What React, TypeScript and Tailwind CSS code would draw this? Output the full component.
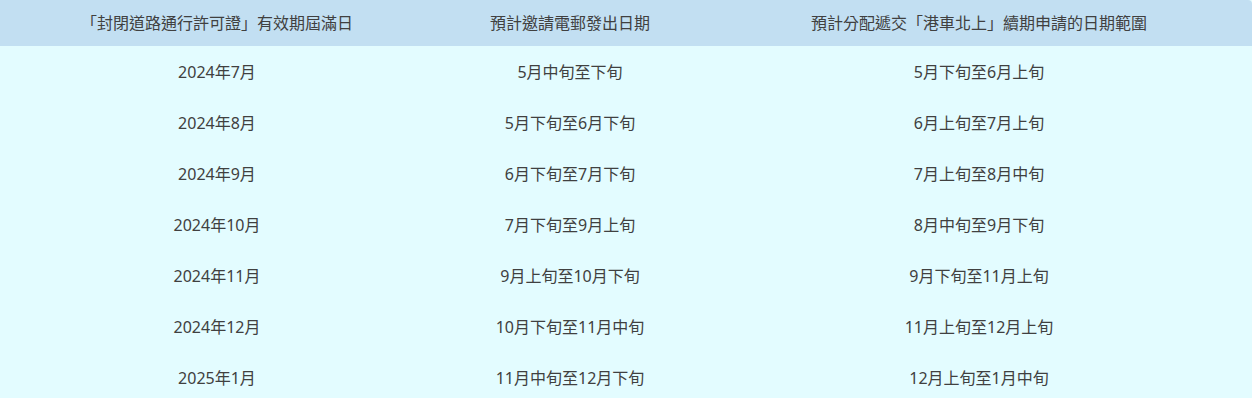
const headers = [
  "「封閉道路通行許可證」有效期屆滿日",
  "預計邀請電郵發出日期",
  "預計分配遞交「港車北上」續期申請的日期範圍",
];

const rows: [string, string, string][] = [
  ["2024年7月", "5月中旬至下旬", "5月下旬至6月上旬"],
  ["2024年8月", "5月下旬至6月下旬", "6月上旬至7月上旬"],
  ["2024年9月", "6月下旬至7月下旬", "7月上旬至8月中旬"],
  ["2024年10月", "7月下旬至9月上旬", "8月中旬至9月下旬"],
  ["2024年11月", "9月上旬至10月下旬", "9月下旬至11月上旬"],
  ["2024年12月", "10月下旬至11月中旬", "11月上旬至12月上旬"],
  ["2025年1月", "11月中旬至12月下旬", "12月上旬至1月中旬"],
];

export default function App() {
  return (
    <main
      className="h-[398px] w-[1252px] overflow-hidden bg-[#e3fcff] text-[16px] text-[#404040]"
      style={{ fontFamily: '"Noto Sans", "Noto Sans CJK TC", sans-serif' }}
    >
      <div className="grid h-[46px] grid-cols-[434px_272px_546px] items-center rounded-tr-[4px] bg-[#c2dff2]">
        {headers.map((h) => (
          <div key={h} className="text-center leading-none">
            {h}
          </div>
        ))}
      </div>
      {rows.map((row) => (
        <div key={row[0]} className="grid h-[51px] grid-cols-[434px_272px_546px] items-center">
          {row.map((cell, i) => (
            <div key={i} className="text-center leading-none">
              {cell}
            </div>
          ))}
        </div>
      ))}
    </main>
  );
}
